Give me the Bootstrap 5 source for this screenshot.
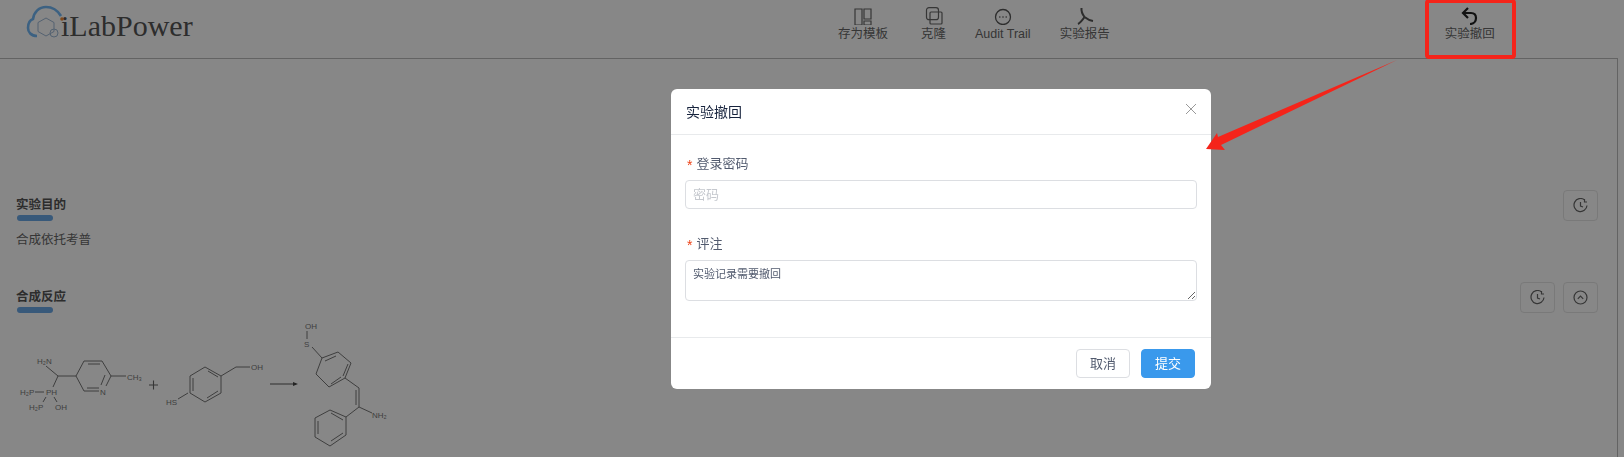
<!DOCTYPE html>
<html lang="zh">
<head>
<meta charset="utf-8">
<title>iLabPower</title>
<link href="https://cdn.jsdelivr.net/npm/bootstrap@5.3.0/dist/css/bootstrap.min.css" rel="stylesheet">
<style>
html,body{height:457px;overflow:hidden;background:#fff}
body{font-family:"Liberation Sans","Noto Sans CJK SC",sans-serif;color:#555;position:relative}
.top-bar{height:58px}
.logo-box{padding:6px 0 0 27px;width:838px}
.logo-box svg{overflow:visible}
.logo-word{font-family:"Liberation Serif",serif;font-size:30px;line-height:36px;color:#555;margin:2px 0 0 -2px}
.tool-group{gap:29px}
.tool-item{font-size:12.5px;line-height:16px;color:#666;padding-top:7px;white-space:nowrap}
.tool-item svg{display:block;height:18px;margin-bottom:1px}
.clone-item{margin-left:4px}
.undo-item{margin-left:306px}
.work-panel{border-top:1px solid #bbb;border-right:1px solid #bbb;margin-right:6px;height:399px;padding:131px 19px 0 16px}
.sec-row{height:31px}
.sec-head{padding-top:6px}
.sec-title{font-size:12.5px;line-height:18px;font-weight:700;color:#555}
.sec-bar{width:36px;height:6px;border-radius:3px;background:#6ba8e6;margin:1px 0 0 1px}
.sec-text{font-size:12.5px;line-height:20px;margin:9px 0 32px;color:#666}
.round-btn{width:35px;height:31px;padding:0;border:1px solid #e4e4e4;border-radius:4px;background:#fff;display:flex;align-items:center;justify-content:center}
.chem-art{display:block;margin:6px 0 0 -16px}
.chem-art text{font-family:"Liberation Sans",sans-serif;font-size:8px;fill:#777}
.chem-art path{fill:none;stroke:#666;stroke-width:.9}
.dim-layer.modal-backdrop{opacity:.47}
.dialog-box{position:absolute;left:671px;top:89px;width:540px;height:300px;border:0;border-radius:6px;z-index:1060;font-size:13px;color:#515a6e;background-color:#fff}
.dialog-box .modal-header{height:46px;padding:0 15px;border-bottom:1px solid #e8eaec;border-radius:6px 6px 0 0}
.dialog-box .modal-title{font-size:14px;line-height:20px;font-weight:400;color:#17233d}
.dialog-box .modal-body{padding:20px 14px 0}
.dialog-box .modal-footer{height:52px;padding:0 16px 0 15px;border-top:1px solid #e8eaec;gap:11px;flex-wrap:nowrap}
.dialog-box .modal-footer>*{margin:0}
.close-x{width:10px;height:10px;padding:0;border:0;background:none;display:block;margin-top:-5px}
.close-x svg{display:block}
.field-label{font-size:13px;line-height:18px;height:18px;margin:0 0 7px 2px;display:block}
.req-star{color:#ed4014;margin-right:4px;font-family:"Liberation Sans",sans-serif;font-size:14px;line-height:1;vertical-align:-2px}
.field-input{height:29px;font-size:13px;padding:3px 7px;border:1px solid #dcdee2;border-radius:4px;margin-bottom:26px;min-height:0;color:#515a6e}
.field-input::placeholder{color:#c5c8ce}
.field-area{height:41px;font-size:11px;line-height:16px;padding:5px 7px;border:1px solid #dcdee2;border-radius:4px;min-height:0;color:#515a6e}
.foot-btn{height:29px;font-size:13px;line-height:27px;padding:0;border-radius:4px}
.foot-cancel{width:54px;border:1px solid #dcdee2;color:#515a6e;background:#fff}
.foot-ok{width:54px;border:1px solid #3a99ec;background:#3a99ec;color:#fff}
.mark-frame{position:absolute;left:1425px;top:-1px;width:91px;height:60px;border:4px solid #f5241a;border-radius:4px;z-index:1070}
.mark-arrow{position:absolute;left:1200px;top:55px;z-index:1070}
</style>
</head>
<body>
<header class="top-bar d-flex">
  <div class="logo-box d-flex align-items-start flex-shrink-0">
    <svg width="36" height="33" viewBox="0 0 36 33">
      <path d="M10 30C4 30 1 26 1 22C1 17 3 14 6 13C7 6 12 1 19 1C26 1 31 5 34 10" fill="none" stroke="#72b8f5" stroke-width="2.6"/>
      <path d="M19 12l8 4.500v9L19 30l-8-4.500v-9z" fill="none" stroke="#9fb9d6" stroke-width="1"/>
      <path d="M23 27a4 4 0 1 0 8 0a4 4 0 1 0-8 0" fill="none" stroke="#9fb9d6" stroke-width="1"/>
      <circle cx="35" cy="13" r="1.800" fill="#f08a30"/>
    </svg>
    <span class="logo-word">iLabPower</span>
  </div>
  <nav class="tool-group d-flex">
    <div class="tool-item d-flex flex-column align-items-center">
      <svg width="18" height="18" viewBox="0 0 18 18" fill="none" stroke="#666" stroke-width="1.200"><path d="M1 2h7v16H1zM10 2h7v10h-7zM10 14h7v4h-7z"/></svg>
      <span>存为模板</span>
    </div>
    <div class="tool-item clone-item d-flex flex-column align-items-center">
      <svg width="18" height="18" viewBox="0 0 18 18" fill="none" stroke="#666" stroke-width="1.200"><rect x="1.500" y="0.700" width="12" height="12" rx="2.500"/><rect x="5" y="5" width="12" height="12" rx="1"/></svg>
      <span>克隆</span>
    </div>
    <div class="tool-item d-flex flex-column align-items-center">
      <svg width="18" height="18" viewBox="0 0 18 18" fill="none" stroke="#555" stroke-width="1.300"><circle cx="9" cy="10" r="7.500"/><circle cx="5.800" cy="10" r=".8" fill="#555" stroke="none"/><circle cx="9" cy="10" r=".8" fill="#555" stroke="none"/><circle cx="12.200" cy="10" r=".8" fill="#555" stroke="none"/></svg>
      <span>Audit Trail</span>
    </div>
    <div class="tool-item d-flex flex-column align-items-center">
      <svg width="18" height="18" viewBox="0 0 18 18" fill="none" stroke="#555" stroke-width="2"><path d="M5.500 1C5 5 7 8 8.500 10M8.500 10C6.500 13 4 16 2 17M8.500 10C11 12 14 13.500 17 14"/></svg>
      <span>实验报告</span>
    </div>
    <div class="tool-item undo-item d-flex flex-column align-items-center">
      <svg width="18" height="18" viewBox="0 0 18 18" fill="none" stroke="#222" stroke-width="2.200"><path d="M7 1L2 6l5 5M2 6h8c3 0 5 2 5 5s-2 6-6 6"/></svg>
      <span>实验撤回</span>
    </div>
  </nav>
</header>
<main class="work-panel">
  <section>
    <div class="sec-row d-flex justify-content-between">
      <div class="sec-head"><div class="sec-title">实验目的</div><div class="sec-bar"></div></div>
      <div class="d-flex gap-2">
        <button class="round-btn" type="button" aria-label="历史"><svg width="15" height="15" viewBox="0 0 15 15" fill="none" stroke="#666" stroke-width="1.200"><path d="M11.500 1.900A6.500 6.500 0 1 0 14 7.500M11.500 1v3h2.500M7.500 4v4l2.500 1"/></svg></button>
      </div>
    </div>
    <p class="sec-text">合成依托考普</p>
  </section>
  <section>
    <div class="sec-row d-flex justify-content-between">
      <div class="sec-head"><div class="sec-title">合成反应</div><div class="sec-bar"></div></div>
      <div class="d-flex gap-2">
        <button class="round-btn" type="button" aria-label="历史"><svg width="15" height="15" viewBox="0 0 15 15" fill="none" stroke="#666" stroke-width="1.200"><path d="M11.500 1.900A6.500 6.500 0 1 0 14 7.500M11.500 1v3h2.500M7.500 4v4l2.500 1"/></svg></button>
        <button class="round-btn" type="button" aria-label="收起"><svg width="15" height="15" viewBox="0 0 15 15" fill="none" stroke="#666" stroke-width="1.200"><circle cx="7.500" cy="7.500" r="6.500"/><path d="M4.800 8.800L7.500 6l2.700 2.800"/></svg></button>
      </div>
    </div>
    <svg class="chem-art" width="420" height="140" viewBox="0 319 420 140">
      <path d="M46 366L58 376L53 387M58 376H76L84 361H102L111 376L106 386M99 391H84L76 376M88 364H100M105 375L101 385M87 388H99M111 376H126"/>
      <path d="M35 392H44M43 402L46 397M54 397L57 402"/>
      <path d="M149 385h9M153.500 380.500v9" style="stroke-width:1.100"/>
      <path d="M205 367L221 376V393L205 402L190 393V376ZM208 371L218 377M218 391L207 398M193 378V391M221 376L236 367H250M188 393L178 399"/>
      <path d="M270 384H296" style="stroke:#444"/>
      <path d="M293 382L298 384L293 386Z" style="fill:#444;stroke:none"/>
      <path d="M307 331V339M312 347L322 358L338 352L351 363L345 378L329 387L316 374L322 358M325 361L336 356M348 364L343 376M331 384L341 377M345 378L359 388V407M356 390V405M359 407L372 413M359 407L346 417V435L330 446L315 437V418L330 410L346 417M343 420L331 413M343 433L331 441M318 421V434"/>
      <text x="37" y="364">H₂N</text><text x="46" y="395">PH</text><text x="20" y="395">H₂P</text><text x="29" y="410">H₂P</text><text x="55" y="410">OH</text>
      <text x="100" y="395">N</text><text x="127" y="380">CH₃</text>
      <text x="166" y="405">HS</text><text x="251" y="370">OH</text>
      <text x="305" y="329">OH</text><text x="304" y="347">S</text><text x="372" y="418">NH₂</text>
    </svg>
  </section>
</main>
<div class="modal-backdrop dim-layer show"></div>
<div class="modal-content dialog-box">
  <div class="modal-header">
    <h5 class="modal-title">实验撤回</h5>
    <button class="close-x ms-auto" type="button" aria-label="关闭"><svg width="10" height="10" viewBox="0 0 10 10" stroke="#999" stroke-width="1"><path d="M0 0L10 10M10 0L0 10"/></svg></button>
  </div>
  <div class="modal-body">
    <form>
      <label class="field-label" for="pwd"><span class="req-star">*</span>登录密码</label>
      <input class="form-control field-input" id="pwd" type="password" placeholder="密码">
      <label class="field-label" for="cmt"><span class="req-star">*</span>评注</label>
      <textarea class="form-control field-area" id="cmt" rows="2">实验记录需要撤回</textarea>
    </form>
  </div>
  <div class="modal-footer">
    <button class="btn foot-btn foot-cancel" type="button">取消</button>
    <button class="btn foot-btn foot-ok" type="button">提交</button>
  </div>
</div>
<div class="mark-frame"></div>
<svg class="mark-arrow" width="200" height="100" viewBox="1200 55 200 100"><path d="M1397 60L1218 137L1217 133L1206 149L1225 150L1221 145Z" fill="#f5241a"/></svg>
<script src="https://cdn.jsdelivr.net/npm/bootstrap@5.3.0/dist/js/bootstrap.bundle.min.js"></script>
</body>
</html>
